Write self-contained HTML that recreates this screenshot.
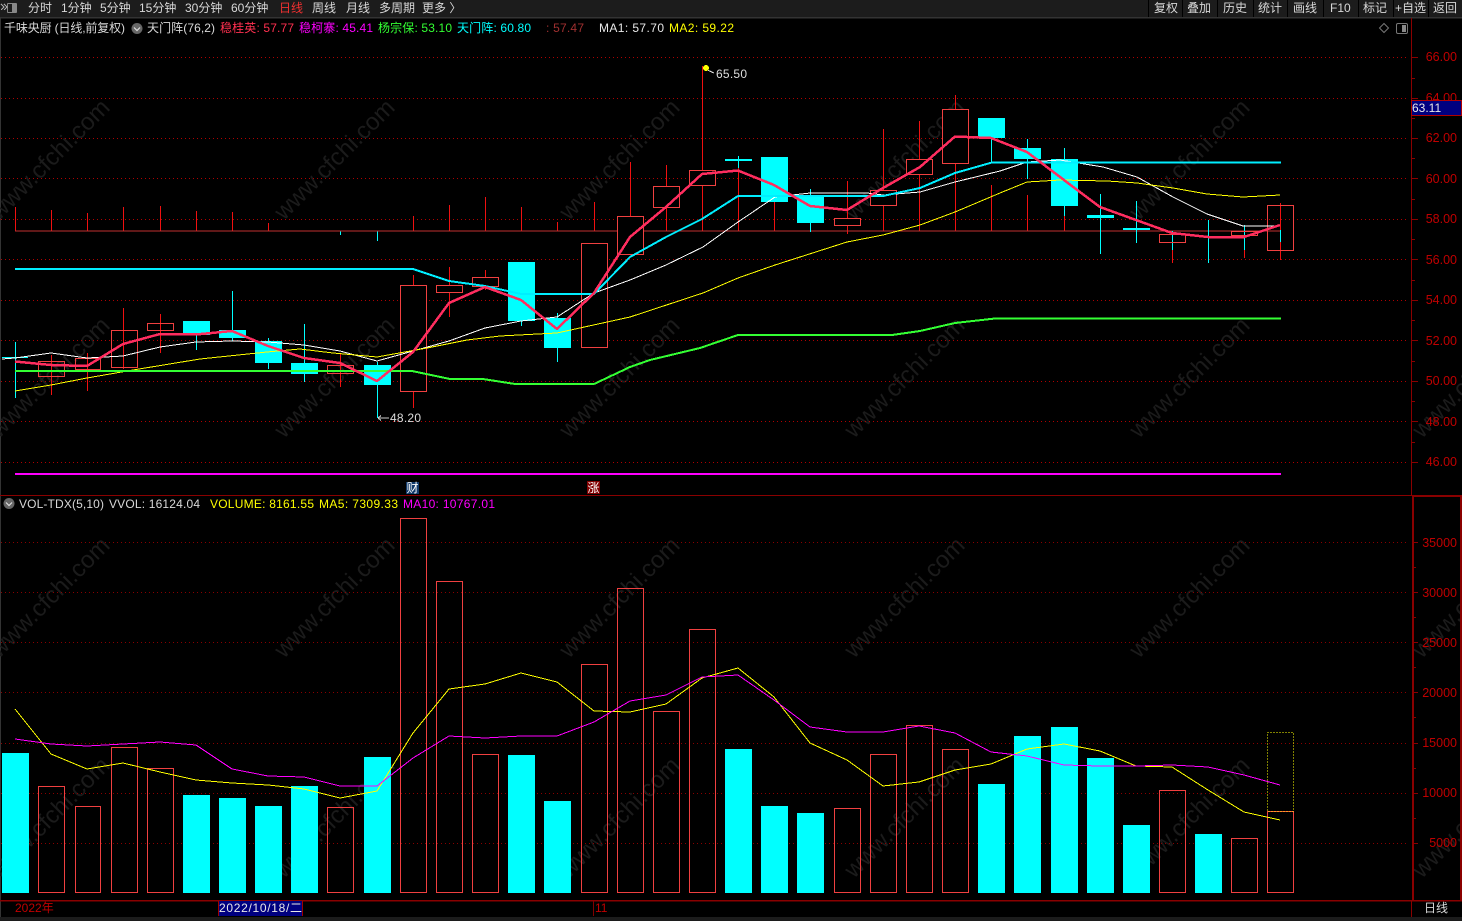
<!DOCTYPE html>
<html><head><meta charset="utf-8"><title>千味央厨</title>
<style>
html,body{margin:0;padding:0;background:#000;width:1462px;height:921px;overflow:hidden}
svg{display:block}
text{font-family:"Liberation Sans","Noto Sans CJK SC",sans-serif;font-size:12px}
.t text{fill:#d8d8d8}
.wm text{fill:#1b1b1b;font-size:24px}
.ax text{fill:#c00000;font-size:12.5px;text-anchor:end}
.b{fill:none;stroke:#f04040;stroke-width:1}
.c{fill:#0ff}
.w{stroke:#f01010;stroke-width:1}
.k{stroke:#0ff;stroke-width:1}
.v{fill:none;stroke:#f04040;stroke-width:1}
</style></head><body>
<svg width="1462" height="921" viewBox="0 0 1462 921" xmlns="http://www.w3.org/2000/svg" shape-rendering="crispEdges">
<rect width="1462" height="921" fill="#000"/>
<!-- top bar -->
<rect width="1462" height="17" fill="#1c1c1c"/>
<rect y="17" width="1462" height="1.5" fill="#333"/>
<rect x="0" y="18" width="1" height="900" fill="#333"/>
<g stroke="#000" stroke-width="1"><path d="M1148.5 0V17M1182.5 0V17M1217.5 0V17M1253.5 0V17M1287.5 0V17M1323.5 0V17M1358.5 0V17M1393.5 0V17M1428.5 0V17"/></g>
<rect x="7.5" y="3.5" width="9" height="9" rx="1" fill="none" stroke="#888"/><rect x="12" y="4" width="4" height="8" fill="#888"/>
<path d="M1 4l3 3-3 3M4 4l3 3-3 3" fill="none" stroke="#aaa"/>
<g class="t">
<text x="28" y="12">分时</text><text x="61" y="12">1分钟</text><text x="100" y="12">5分钟</text><text x="139" y="12">15分钟</text><text x="185" y="12">30分钟</text><text x="231" y="12">60分钟</text>
<text x="279" y="12" style="fill:#f03030">日线</text><text x="312" y="12">周线</text><text x="346" y="12">月线</text><text x="379" y="12">多周期</text><text x="422" y="12">更多 〉</text>
<text x="1154" y="12">复权</text><text x="1187" y="12">叠加</text><text x="1223" y="12">历史</text><text x="1258" y="12">统计</text><text x="1293" y="12">画线</text><text x="1330" y="12">F10</text><text x="1363" y="12">标记</text><text x="1395" y="12">+自选</text><text x="1433" y="12">返回</text>
</g>
<!-- watermark -->
<g class="wm" text-anchor="middle">
<text transform="translate(55,165) rotate(-45)">www.cfchi.com</text><text transform="translate(340,165) rotate(-45)">www.cfchi.com</text><text transform="translate(625,165) rotate(-45)">www.cfchi.com</text><text transform="translate(910,165) rotate(-45)">www.cfchi.com</text><text transform="translate(1195,165) rotate(-45)">www.cfchi.com</text>
<text transform="translate(55,383) rotate(-45)">www.cfchi.com</text><text transform="translate(340,383) rotate(-45)">www.cfchi.com</text><text transform="translate(625,383) rotate(-45)">www.cfchi.com</text><text transform="translate(910,383) rotate(-45)">www.cfchi.com</text><text transform="translate(1195,383) rotate(-45)">www.cfchi.com</text><text transform="translate(1478,383) rotate(-45)">www.cfchi.com</text>
<text transform="translate(55,603) rotate(-45)">www.cfchi.com</text><text transform="translate(340,603) rotate(-45)">www.cfchi.com</text><text transform="translate(625,603) rotate(-45)">www.cfchi.com</text><text transform="translate(910,603) rotate(-45)">www.cfchi.com</text><text transform="translate(1195,603) rotate(-45)">www.cfchi.com</text><text transform="translate(1478,603) rotate(-45)">www.cfchi.com</text>
<text transform="translate(55,823) rotate(-45)">www.cfchi.com</text><text transform="translate(340,823) rotate(-45)">www.cfchi.com</text><text transform="translate(625,823) rotate(-45)">www.cfchi.com</text><text transform="translate(910,823) rotate(-45)">www.cfchi.com</text><text transform="translate(1195,823) rotate(-45)">www.cfchi.com</text><text transform="translate(1478,823) rotate(-45)">www.cfchi.com</text>
</g>
<!-- grid -->
<g stroke-width="1" stroke-dasharray="1 3">
<path stroke="#b00000" d="M1 57.5H1408M1 98.5H1408M1 138.5H1408M1 178.5H1408M1 219.5H1408M1 259.5H1408M1 300.5H1408M1 340.5H1408M1 381.5H1408M1 421.5H1408M1 462.5H1408"/>
<path stroke="#8a0000" d="M1 542.5H1408M1 592.5H1408M1 642.5H1408M1 692.5H1408M1 743.5H1408M1 793.5H1408M1 843.5H1408"/>
</g>
<!-- frames -->
<g fill="#8a0000">
<rect x="1411" y="18" width="1" height="478"/>
<rect x="1412" y="496" width="2" height="404"/>
<rect x="0" y="495" width="1412" height="1"/>
<rect x="1412" y="495" width="50" height="2"/>
<rect x="0" y="900" width="1462" height="1.5"/>
<rect x="1460" y="496" width="2" height="405"/>
<rect x="1411" y="901" width="1" height="16"/>
</g>
<g stroke="#8a0000" stroke-width="1">
<path d="M1412 57.5h6M1412 98.5h6M1412 138.5h6M1412 178.5h6M1412 219.5h6M1412 259.5h6M1412 300.5h6M1412 340.5h6M1412 381.5h6M1412 421.5h6M1412 462.5h6M1412 78.5h3M1412 118.5h3M1412 158.5h3M1412 199.5h3M1412 239.5h3M1412 280.5h3M1412 320.5h3M1412 361.5h3M1412 401.5h3M1412 442.5h3"/>
<path d="M1414 542.5h4M1414 592.5h4M1414 642.5h4M1414 692.5h4M1414 743.5h4M1414 793.5h4M1414 843.5h4M1414 567.5h2M1414 617.5h2M1414 667.5h2M1414 717.5h2M1414 768.5h2M1414 818.5h2"/>
</g>
<g class="ax">
<text x="1457" y="61">66.00</text><text x="1457" y="102">64.00</text><text x="1457" y="142">62.00</text><text x="1457" y="183">60.00</text><text x="1457" y="223">58.00</text><text x="1457" y="264">56.00</text><text x="1457" y="304">54.00</text><text x="1457" y="345">52.00</text><text x="1457" y="385">50.00</text><text x="1457" y="426">48.00</text><text x="1457" y="466">46.00</text>
<text x="1457" y="547">35000</text><text x="1457" y="597">30000</text><text x="1457" y="647">25000</text><text x="1457" y="697">20000</text><text x="1457" y="747">15000</text><text x="1457" y="797">10000</text><text x="1457" y="847">5000</text>
</g>
<rect x="1411.5" y="100.5" width="50" height="15" fill="#000080" stroke="#b00000"/>
<text x="1412" y="112" fill="#e8e8e8">63.11</text>
<!-- icons top right -->
<path d="M1384 23.5l4.5 4.5-4.5 4.5-4.5-4.5z" fill="none" stroke="#777" shape-rendering="auto"/>
<rect x="1396.5" y="23.5" width="11" height="10" rx="1.5" fill="none" stroke="#777" shape-rendering="auto"/><rect x="1402" y="25" width="4" height="7" fill="#888"/>
<!-- base line & histogram wicks -->
<g class="w">
<path d="M51.5 210V231M87.5 213V231M123.5 207V231M160.5 206V231M196.5 211V231M232.5 212V231M268.5 223V231M413.5 216V231M449.5 205V231M485.5 197V231M521.5 207V231M557.5 222V231M594.5 202V231M630.5 162V231M666.5 165V231M702.5 66V231M738.5 165V231M774.5 177V231M810.5 223V231M847.5 181V234M883.5 129V231M919.5 121V231M955.5 95V231M991.5 185V231M1027.5 195V231M1064.5 216V231"/>
<path d="M1172.5 250V263M1244.5 250V258M1280.5 203V260M15.5 207V231"/>
</g>
<g class="k"><path d="M340.5 231V235M377.5 231V241"/></g>
<rect x="15" y="230.5" width="1266" height="1" fill="#c03030"/>
<!-- candles wicks main -->
<g class="w">
<path d="M51.5 355V395M87.5 353V391M123.5 308V369M160.5 314V353M340.5 354V387M413.5 275V408M449.5 267V317M485.5 270V290"/>
</g>
<g class="k">
<path d="M15.5 342V398M196.5 330V350M232.5 291V341M268.5 338V369M304.5 324V382M377.5 362V418M521.5 300V326M557.5 313V362M738.5 156V168M810.5 189V232M991.5 138V163M1027.5 139V179M1064.5 148V216M1100.5 194V254M1136.5 201V243M1172.5 231V250M1208.5 220V263M1244.5 225V250M1280.5 230V242"/>
</g>
<path d="M2 357.5H28" stroke="#0ff"/>
<!-- red boxes -->
<g class="b">
<rect x="38.5" y="361.5" width="26" height="15"/><rect x="75.5" y="358.5" width="25" height="11"/><rect x="111.5" y="330.5" width="26" height="37"/><rect x="147.5" y="323.5" width="26" height="7"/><rect x="327.5" y="365.5" width="26" height="8"/><rect x="400.5" y="285.5" width="26" height="106" fill="#000"/><rect x="436.5" y="285.5" width="26" height="7" fill="#000"/><rect x="472.5" y="277.5" width="26" height="9" fill="#000"/><rect x="581.5" y="243.5" width="26" height="104" fill="#000"/><rect x="617.5" y="216.5" width="26" height="38" fill="#000"/><rect x="653.5" y="186.5" width="26" height="21" fill="#000"/><rect x="689.5" y="170.5" width="26" height="15" fill="#000"/><rect x="834.5" y="218.5" width="26" height="7" fill="#000"/><rect x="870.5" y="190.5" width="26" height="15" fill="#000"/><rect x="906.5" y="159.5" width="26" height="15" fill="#000"/><rect x="942.5" y="109.5" width="26" height="54" fill="#000"/><rect x="1159.5" y="234.5" width="26" height="8"/><rect x="1231.5" y="231.5" width="26" height="4"/><rect x="1267.5" y="205.5" width="26" height="45"/>
</g>
<!-- cyan bodies -->
<g class="c">
<rect x="183" y="321" width="27" height="14"/><rect x="219" y="330" width="27" height="8"/><rect x="255" y="341" width="27" height="22"/><rect x="291" y="363" width="27" height="11"/><rect x="364" y="365" width="27" height="20"/><rect x="508" y="262" width="27" height="59"/><rect x="544" y="318" width="27" height="30"/><rect x="725" y="159" width="27" height="2"/><rect x="761" y="157" width="27" height="45"/><rect x="797" y="195" width="27" height="28"/><rect x="978" y="118" width="27" height="20"/><rect x="1014" y="148" width="27" height="11"/><rect x="1051" y="159" width="27" height="47"/><rect x="1087" y="215" width="27" height="3"/><rect x="1123" y="228" width="27" height="2"/>
</g>
<rect x="15" y="473" width="1266" height="2" fill="#f0f"/>
<!-- lines -->
<g fill="none" stroke-linejoin="round">
<polyline stroke="#fff" stroke-width="1" points="2,359 15,358 51,353 87,358 123,356 160,347 196,342 232,341 268,342 304,345 340,351 377,361 413,351 449,341 485,328 521,321 557,317 594,293 630,280 666,265 703,247 738,222 775,197 810,193 867,193 883,195 920,192 955,182 1000,171 1027,162 1060,160 1103,167 1137,177 1173,197 1207,214 1243,226 1280,226"/>
<polyline stroke="#ff0" stroke-width="1" points="15,391 51,385 87,378 133,370 200,359 267,352 300,349 333,353 377,357 427,348 467,340 500,336 557,333 630,317 703,293 738,278 775,265 847,242 883,235 920,225 955,212 1000,193 1027,182 1060,180 1107,181 1137,183 1173,188 1207,194 1243,197 1280,195"/>
<polyline stroke="#0ef" stroke-width="2" points="15,269 413,269 449,281 485,286 521,294 594,294 630,257 666,237 702,219 738,196 883,196 920,188 955,173 992,162.500 1281,162.500"/>
<polyline stroke="#33ff33" stroke-width="2" points="15,371 412,371 450,379 483,379 515,384 594,384 630,367 650,360 700,348 738,335 892,335 920,331 955,323 995,318.500 1281,318.500"/>
<polyline stroke="#ff2d5f" stroke-width="2.500" points="15,361.500 51,365 87,366 123,344 160,334 196,334.500 232,331 268,346 304,358 340,363 377,381 413,352 449,303 485,287 521,300 557,329 594,293 630,237 666,207 702,174 738,170.500 774,185 810,206 847,210 883,188 920,167 955,136.500 991,138 1027,152 1064,180 1100,207 1136,220 1172,233 1208,237 1244,237 1280,225"/>
</g>
<!-- annotations -->
<path d="M703 68L714 73" stroke="#ddd"/><circle cx="706" cy="68" r="3" fill="#ff0"/>
<text x="716" y="78" fill="#ddd" textLength="31">65.50</text>
<path d="M378 418H389M378 418l3-2.500M378 418l3 2.500" stroke="#ccc" fill="none"/>
<text x="390" y="422" fill="#ddd" textLength="31">48.20</text>
<rect x="406" y="482" width="13" height="12" fill="#123a6a"/><text x="406.500" y="492" fill="#fff">财</text>
<rect x="587" y="481" width="13" height="13" fill="#800000"/><text x="587.500" y="492" fill="#fff">涨</text>
<!-- legend -->
<g>
<text x="4" y="32" fill="#d8d8d8" textLength="121">千味央厨 (日线,前复权)</text>
<circle cx="137" cy="28.500" r="5.500" fill="#666" shape-rendering="auto"/><path d="M134 27.500l3 3 3-3" stroke="#ddd" fill="none" stroke-width="1.200" shape-rendering="auto"/>
<text x="147" y="32" fill="#d8d8d8" textLength="68">天门阵(76,2)</text>
<text x="220" y="32" fill="#ff3050" textLength="74">稳桂英: 57.77</text>
<text x="299" y="32" fill="#f0f" textLength="74">稳柯寨: 45.41</text>
<text x="378" y="32" fill="#33ff33" textLength="74">杨宗保: 53.10</text>
<text x="457" y="32" fill="#0ff" textLength="74">天门阵: 60.80</text>
<text x="546" y="32" fill="#a03030" textLength="38">: 57.47</text>
<text x="599" y="32" fill="#e8e8e8" textLength="65">MA1: 57.70</text>
<text x="669" y="32" fill="#ff0" textLength="65">MA2: 59.22</text>
</g>
<circle cx="9" cy="503.500" r="5.500" fill="#666" shape-rendering="auto"/><path d="M6 502.500l3 3 3-3" stroke="#ddd" fill="none" stroke-width="1.200" shape-rendering="auto"/>
<text x="19" y="508" fill="#d8d8d8" textLength="85">VOL-TDX(5,10)</text>
<text x="109" y="508" fill="#d8d8d8" textLength="91">VVOL: 16124.04</text>
<text x="210" y="508" fill="#ff0" textLength="104">VOLUME: 8161.55</text>
<text x="319" y="508" fill="#ff0" textLength="79">MA5: 7309.33</text>
<text x="403" y="508" fill="#f0f" textLength="92">MA10: 10767.01</text>
<!-- volume bars -->
<g class="c">
<rect x="2" y="753" width="27" height="140"/><rect x="183" y="795" width="27" height="98"/><rect x="219" y="798" width="27" height="95"/><rect x="255" y="806" width="27" height="87"/><rect x="291" y="786" width="27" height="107"/><rect x="364" y="757" width="27" height="136"/><rect x="508" y="755" width="27" height="138"/><rect x="544" y="801" width="27" height="92"/><rect x="725" y="749" width="27" height="144"/><rect x="761" y="806" width="27" height="87"/><rect x="797" y="813" width="27" height="80"/><rect x="978" y="784" width="27" height="109"/><rect x="1014" y="736" width="27" height="157"/><rect x="1051" y="727" width="27" height="166"/><rect x="1087" y="758" width="27" height="135"/><rect x="1123" y="825" width="27" height="68"/><rect x="1195" y="834" width="27" height="59"/>
</g>
<g class="v">
<rect x="38.500" y="786.500" width="26" height="106"/><rect x="75.500" y="806.500" width="25" height="86"/><rect x="111.500" y="747.500" width="26" height="145"/><rect x="147.500" y="768.500" width="26" height="124"/><rect x="327.500" y="807.500" width="26" height="85"/><rect x="400.500" y="518.500" width="26" height="374"/><rect x="436.500" y="581.500" width="26" height="311"/><rect x="472.500" y="754.500" width="26" height="138"/><rect x="581.500" y="664.500" width="26" height="228"/><rect x="617.500" y="588.500" width="26" height="304"/><rect x="653.500" y="711.500" width="26" height="181"/><rect x="689.500" y="629.500" width="26" height="263"/><rect x="834.500" y="808.500" width="26" height="84"/><rect x="870.500" y="754.500" width="26" height="138"/><rect x="906.500" y="725.500" width="26" height="167"/><rect x="942.500" y="749.500" width="26" height="143"/><rect x="1159.500" y="790.500" width="26" height="102"/><rect x="1231.500" y="838.500" width="26" height="54"/><rect x="1267.500" y="811.500" width="26" height="81"/>
</g>
<rect x="1267.500" y="732.500" width="26" height="79" fill="none" stroke="#ff0" stroke-dasharray="1 2"/>
<g fill="none" stroke-width="1">
<polyline stroke="#ff0" points="15,709 51,754 87,769 123,763 160,772 196,780 232,783 268,785 304,789 340,798 377,791 413,733 449,689 485,684 521,673 557,682 594,711 630,712 666,704 702,678 738,668 774,697 810,743 847,760 883,786 919,782 955,770 991,764 1027,749 1064,744 1100,751 1136,766 1172,767 1208,790 1244,812 1280,820"/>
<polyline stroke="#f0f" points="15,739 51,744 87,746 123,744 160,742 196,745 232,769 268,776 304,777 340,786 377,786 413,758 449,736 485,738 521,736 557,736 594,722 630,701 666,695 702,677 738,675 774,700 810,727 847,732 883,732 919,726 955,733 991,752 1027,756 1064,765 1100,766 1136,766 1172,765 1208,767 1244,775 1280,785"/>
</g>
<!-- bottom axis -->
<text x="15" y="912" fill="#c00000">2022年</text>
<rect x="218" y="901" width="85" height="15" fill="#000080"/><path d="M218.500 901V916M302.500 901V916" stroke="#a00000"/>
<text x="219" y="912" fill="#e8e8e8" textLength="83">2022/10/18/二</text>
<path d="M593.500 901V916" stroke="#800000"/><text x="595" y="912" fill="#c00000">11</text>
<text x="1424" y="912" fill="#d8d8d8">日线</text>
<rect y="917" width="1462" height="4" fill="#1c1c1c"/>
</svg>
</body></html>
